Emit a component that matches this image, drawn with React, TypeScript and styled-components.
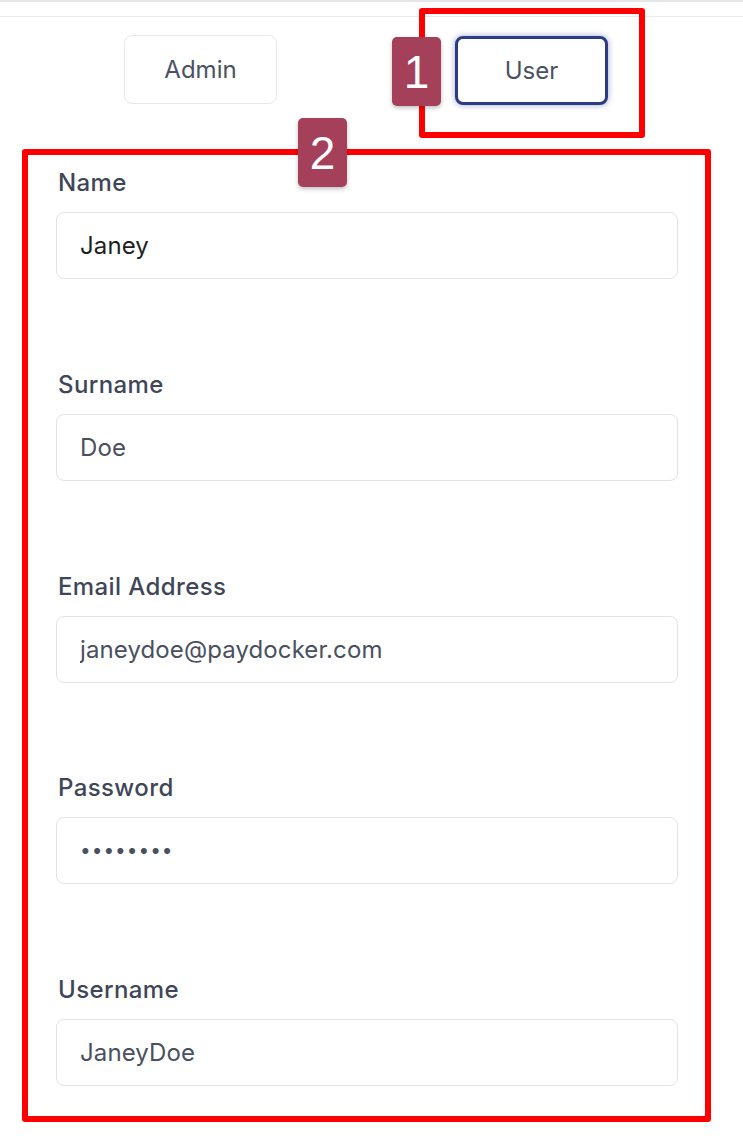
import React from 'react';
import styled, { createGlobalStyle } from 'styled-components';

const GlobalStyle = createGlobalStyle`
  body {
    margin: 0;
    background: #ffffff;
    font-family: Inter, "Noto Sans", sans-serif;
  }
`;

const Page = styled.div`
  position: relative;
  width: 743px;
  height: 1141px;
  overflow: hidden;
  background: #ffffff;
`;

const TopBar = styled.div`
  height: 14px;
  border-top: 2px solid #e4e6ea;
  border-bottom: 1px solid #e8edf2;
`;

const RoleRow = styled.div`
  display: flex;
  gap: 178px;
  padding: 18px 0 0 124px;
`;

const RoleButton = styled.button<{ $active?: boolean }>`
  width: 153px;
  height: 69px;
  box-sizing: border-box;
  border-radius: 8px;
  background: #ffffff;
  font-family: Inter, "Noto Sans", sans-serif;
  font-size: 24px;
  color: #4a5262;
  border: ${(p) => (p.$active ? '3px solid #2c3b85' : '1px solid #e6e8eb')};
  box-shadow: ${(p) => (p.$active ? '0 0 6px rgba(44, 59, 133, 0.45)' : 'none')};
  margin-top: ${(p) => (p.$active ? '1px' : '0')};
`;

const Form = styled.form`
  display: flex;
  flex-direction: column;
  gap: 90.75px;
  padding: 63px 65px 0 56px;
`;

const Field = styled.div`
  display: flex;
  flex-direction: column;
  gap: 14px;
`;

const Label = styled.label`
  font-size: 24px;
  line-height: 30px;
  font-weight: 500;
  letter-spacing: 0.4px;
  color: #3e4658;
  padding-left: 2px;
`;

const Input = styled.input<{ $dark?: boolean; $secret?: boolean }>`
  height: 67px;
  box-sizing: border-box;
  border: 1px solid #e2e3e5;
  border-radius: 8px;
  padding: 0 23px;
  font-family: Inter, "Noto Sans", sans-serif;
  font-size: ${(p) => (p.$secret ? '19px' : '24px')};
  letter-spacing: ${(p) => (p.$secret ? '1px' : '0.1px')};
  color: ${(p) => (p.$dark ? '#1e1f22' : '#4a5060')};
  background: #ffffff;
  outline: none;
`;

const Marker = styled.div<{ $x: number; $y: number; $w: number; $h: number }>`
  position: absolute;
  left: ${(p) => p.$x}px;
  top: ${(p) => p.$y}px;
  width: ${(p) => p.$w}px;
  height: ${(p) => p.$h}px;
  box-sizing: border-box;
  border: 6px solid #ff0000;
  border-radius: 3px;
  pointer-events: none;
`;

const Badge = styled.div<{ $x: number; $y: number }>`
  position: absolute;
  left: ${(p) => p.$x}px;
  top: ${(p) => p.$y}px;
  width: 49px;
  height: 69px;
  border-radius: 5px;
  background: #a4405a;
  box-shadow: 0 2px 4px rgba(0, 0, 0, 0.25);
  color: #ffffff;
  font-family: "Liberation Sans", Arial, sans-serif;
  font-size: 46px;
  display: flex;
  align-items: center;
  justify-content: center;
`;

const fields = [
  { label: 'Name', value: 'Janey', dark: true },
  { label: 'Surname', value: 'Doe' },
  { label: 'Email Address', value: 'janeydoe@paydocker.com' },
  { label: 'Password', value: '12345678', type: 'password' },
  { label: 'Username', value: 'JaneyDoe' },
];

export default function App() {
  return (
    <Page>
      <GlobalStyle />
      <TopBar />
      <RoleRow>
        <RoleButton type="button">Admin</RoleButton>
        <RoleButton type="button" $active>
          User
        </RoleButton>
      </RoleRow>
      <Form>
        {fields.map((f) => (
          <Field key={f.label}>
            <Label>{f.label}</Label>
            <Input
              type={f.type || 'text'}
              value={f.value}
              readOnly
              $dark={f.dark}
              $secret={f.type === 'password'}
            />
          </Field>
        ))}
      </Form>
      <Marker $x={419} $y={8} $w={226} $h={130} />
      <Badge $x={392} $y={37}>1</Badge>
      <Marker $x={22} $y={149} $w={689} $h={973} />
      <Badge $x={298} $y={118}>2</Badge>
    </Page>
  );
}
